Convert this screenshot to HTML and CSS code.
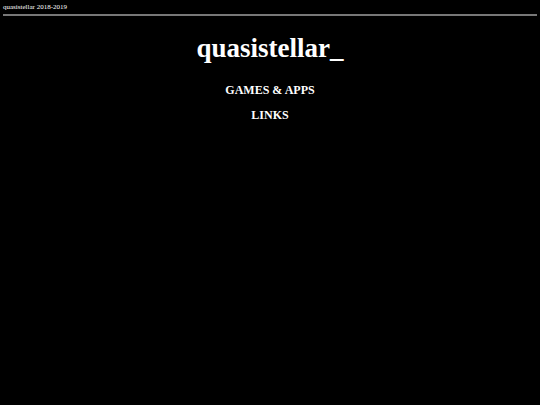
FILE: index.html
```html
<!DOCTYPE html>
<html>
<head>
<meta charset="utf-8">
<link rel="stylesheet" href="styles.css">
</head>
<body>
<header class="top">
  <div class="credit">quasistellar 2018-2019</div>
  <hr class="rule">
</header>
<main class="main">
  <h1 class="title">quasistellar_</h1>
  <nav class="menu">
    <a class="item" href="#">GAMES &amp; APPS</a>
    <a class="item" href="#">LINKS</a>
  </nav>
</main>
</body>
</html>
```
FILE: styles.css
```css
html, body {
  margin: 0;
  padding: 0;
  background: #000;
  color: #fff;
  font-family: "Liberation Serif", "Times New Roman", serif;
}
body {
  width: 540px;
  height: 405px;
  overflow: hidden;
}
.top {
  padding: 3px 3px 0;
}
.credit {
  font-size: 7px;
  line-height: 8px;
  color: #fff;
}
.rule {
  margin: 3px 0 0;
  border: 0;
  height: 2px;
  background: #777;
}
.main {
  display: flex;
  flex-direction: column;
  align-items: center;
}
.title {
  margin: 16px 0 0;
  font-size: 27px;
  line-height: 32px;
  font-weight: bold;
}
.menu {
  display: flex;
  flex-direction: column;
  align-items: center;
  gap: 11px;
  margin-top: 19px;
}
.item {
  color: #fff;
  text-decoration: none;
  font-weight: bold;
  font-size: 12px;
  line-height: 14px;
}
```
